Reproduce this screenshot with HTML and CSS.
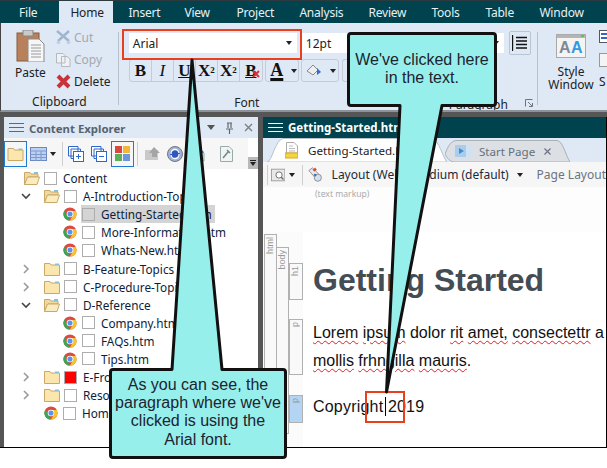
FILE: index.html

```html
<!DOCTYPE html>
<html>
<head>
<meta charset="utf-8">
<title>Getting-Started.htm</title>
<link rel="stylesheet" href="styles.css">
</head>
<body>
<svg class="defs" width="0" height="0">
	<symbol id="chrome" viewBox="0 0 16 16">
		<circle cx="8" cy="8" r="7.5" fill="#dd4b3e"/>
		<path d="M1.6 4 L5 10 L8 15.5 A7.5 7.5 0 0 1 1.6 4z" fill="#3aa757"/>
		<path d="M8 4.5 H14.7 A7.5 7.5 0 0 1 8 15.5 L11 10z" fill="#f5c32c"/>
		<circle cx="8" cy="8" r="3.8" fill="#fff"/>
		<circle cx="8" cy="8" r="2.9" fill="#5b93ea"/>
	</symbol>
	<symbol id="folder" viewBox="0 0 16 14">
		<path d="M.5 3 V1.5 H6 L7 3 H15.5 V13.5 H.5z" fill="#fbe7ae" stroke="#c9a868"/>
		<path d="M11 1.5 H15 V3 H11z" fill="#7fc4dc"/>
	</symbol>
	<symbol id="folder-open" viewBox="0 0 16 14">
		<path d="M.5 13.5 V1.5 H6 L7 3 H14 V6 H4z" fill="#f0d9a0" stroke="#c9a868"/>
		<path d="M.5 13.5 L3.5 6 H15.5 L13 13.5z" fill="#fbecc0" stroke="#c9a868"/>
		<path d="M10 1 H14 V3 H10z" fill="#7fc4dc"/>
	</symbol>
	<symbol id="chev-r" viewBox="0 0 8 10"><path d="M2 1 L6 5 L2 9" fill="none" stroke="#9a9a9a" stroke-width="1.6"/></symbol>
	<symbol id="chev-d" viewBox="0 0 10 8"><path d="M1 2 L5 6 L9 2" fill="none" stroke="#444" stroke-width="1.6"/></symbol>
</svg>

<div class="app">
	<div class="menu">
		<span class="menu-tab">File</span>
		<span class="menu-tab on">Home</span>
		<span class="menu-tab">Insert</span>
		<span class="menu-tab">View</span>
		<span class="menu-tab">Project</span>
		<span class="menu-tab">Analysis</span>
		<span class="menu-tab">Review</span>
		<span class="menu-tab">Tools</span>
		<span class="menu-tab">Table</span>
		<span class="menu-tab">Window</span>
	</div>

	<div class="ribbon">
		<div class="group clip">
			<div class="clip-main">
				<div class="paste">
					<svg width="30" height="32" viewBox="0 0 30 32">
						<rect x="1" y="3" width="22" height="28" fill="#b9805c" stroke="#8a5a3c"/>
						<rect x="7" y="0" width="10" height="6" fill="#c9c9c9" stroke="#888"/>
						<path d="M12 9 H23 L28 14 V32 H12z" fill="#f6f6f6" stroke="#8a8a8a"/>
						<path d="M15 15 H25 M15 18 H25 M15 21 H25 M15 24 H25 M15 27 H25" stroke="#9a9a9a"/>
					</svg>
					<span>Paste</span>
				</div>
				<div class="clip-list">
					<div class="off">
						<svg width="15" height="15" viewBox="0 0 15 15"><path d="M1 1 L13 11 M13 1 L2 11" stroke="#9fb6d0" stroke-width="2.4"/><circle cx="2.5" cy="12.5" r="1.8" fill="#bcd0e6"/><circle cx="12.5" cy="12.5" r="1.8" fill="#bcd0e6"/></svg>
						Cut
					</div>
					<div class="off">
						<svg width="15" height="15" viewBox="0 0 15 15"><path d="M.5 1.5 H7 L9 3.5 V11 H.5z M5.5 4.5 H11 L14 7 V14.5 H5.5z" fill="#eef1f5" stroke="#b5b9bf"/></svg>
						Copy
					</div>
					<div>
						<svg width="15" height="15" viewBox="0 0 15 15"><path d="M2 2 L13 13 M13 2 L2 13" stroke="#c8323a" stroke-width="4"/></svg>
						Delete
					</div>
				</div>
			</div>
			<div class="group-name">Clipboard</div>
		</div>

		<div class="group font">
			<div class="combos">
				<div class="combo face">Arial<i class="caret"></i></div>
				<div class="combo size">12pt<i class="caret"></i></div>
				<div class="para-btn">
					<svg width="16" height="16" viewBox="0 0 16 16"><path d="M1 .5 H.5 V15.5 H1 M4 2.5 H15 M4 6 H15 M4 9.5 H15 M4 13 H15" fill="none" stroke="#111" stroke-width="1.4"/></svg>
				</div>
			</div>
			<div class="fmt-row">
				<div class="fmt-set">
					<b>B</b><em>I</em><b class="ul">U</b><b>X<sup>2</sup></b><b>X<sub>2</sub></b><b class="clear">B<svg width="8" height="8" viewBox="0 0 8 8"><path d="M1 1 L7 7 M7 1 L1 7" stroke="#d8303a" stroke-width="2"/></svg></b>
				</div>
				<div class="fmt-set color">
					<b class="ul thick">A</b><i class="caret"></i>
				</div>
				<div class="fmt-set fill">
					<svg width="16" height="15" viewBox="0 0 16 15"><path d="M1 8 L7 2 L12 7 L7 12z" fill="#eee" stroke="#888"/><path d="M11 5 L15 9 L11 12z" fill="#2f6fd0"/></svg>
					<i class="caret"></i>
				</div>
				<div class="fmt-set blank"></div>
			</div>
			<div class="group-name font-name">
				<span>Font</span>
				<span class="para-name">Paragraph</span>
				<svg class="launcher" width="8" height="8" viewBox="0 0 8 8"><path d="M.5 7.5 V.5 H7.5 M3 3 L7 7 M4 7.5 H7.5 V4" fill="none" stroke="#6c7480"/></svg>
			</div>
		</div>

		<div class="group style">
			<svg width="30" height="24" viewBox="0 0 30 24">
				<rect x=".5" y=".5" width="29" height="23" fill="#f4f4f4" stroke="#a9a9a9"/>
				<rect x="1" y="1" width="28" height="3" fill="#b5b5b5"/>
				<rect x="25" y="1" width="3" height="2" fill="#5cc25c"/>
				<text x="3" y="19" class="aa-grey">A</text>
				<text x="15" y="19" class="aa-blue">A</text>
			</svg>
			<span>Style<br>Window</span>
		</div>
		<div class="ribbon-end">
			<svg width="8" height="44" viewBox="0 0 8 44"><rect x=".5" y=".5" width="12" height="12" fill="#fff" stroke="#556"/><rect x="2" y="3" width="8" height="2" fill="#2f67c8"/><rect x="2" y="7" width="8" height="2" fill="#2f67c8"/><rect x=".5" y="23.5" width="12" height="13" fill="#f4f4f4" stroke="#999"/></svg>
			<span>S</span>
		</div>
	</div>

	<div class="panes">
		<div class="explorer">
			<div class="pane-title">
				<span class="burger dark"><i></i><i></i><i></i></span>
				<span class="pane-name">Content Explorer</span>
				<span class="pane-ctl">
					<i class="caret big"></i>
					<svg width="9" height="12" viewBox="0 0 9 12"><path d="M2 1 H7 M3 1 V6 M6 1 V6 M1 7 H8 M4.5 7 V12" fill="none" stroke="#666" stroke-width="1.2"/></svg>
					<svg width="9" height="9" viewBox="0 0 9 9"><path d="M1 1 L8 8 M8 1 L1 8" stroke="#7f7f7f" stroke-width="1.4"/></svg>
				</span>
			</div>
			<div class="explorer-tools">
				<span class="tool picked"><svg width="17" height="14"><use href="#folder"/></svg></span>
				<span class="tool">
					<svg width="17" height="14" viewBox="0 0 17 14"><rect x=".5" y=".5" width="16" height="13" fill="#bcd0f0" stroke="#6f88c0"/><path d="M.5 4 H16 M.5 7.5 H16 M.5 10.5 H16 M6 4 V14 M11 4 V14" stroke="#7f9ad0"/></svg>
				</span>
				<i class="caret"></i>
				<span class="tool-sep"></span>
				<span class="tool wide">
					<svg width="16" height="16" viewBox="0 0 16 16"><path d="M.5 .5 H10 V10 H.5z M3 3 H12.5 V12.5 H3z" fill="#fff" stroke="#2f67c8"/><rect x="5.5" y="5.5" width="10" height="10" fill="#fff" stroke="#2f67c8"/><path d="M8 10.5 H13 M10.5 8 V13" stroke="#2f67c8"/></svg>
				</span>
				<span class="tool wide">
					<svg width="16" height="16" viewBox="0 0 16 16"><path d="M.5 .5 H10 V10 H.5z M3 3 H12.5 V12.5 H3z" fill="#fff" stroke="#2f67c8"/><rect x="5.5" y="5.5" width="10" height="10" fill="#fff" stroke="#2f67c8"/><path d="M8 10.5 H13" stroke="#2f67c8"/></svg>
				</span>
				<span class="tool picked colors">
					<svg width="15" height="15" viewBox="0 0 15 15"><rect x="0" y="0" width="7" height="7" fill="#d8483e"/><rect x="8" y="0" width="7" height="7" fill="#f1b63a"/><rect x="0" y="8" width="7" height="7" fill="#5cae5c"/><rect x="8" y="8" width="7" height="7" fill="#6d96dc"/></svg>
				</span>
				<span class="tool-sep"></span>
				<span class="tool grey">
					<svg width="17" height="15" viewBox="0 0 17 15"><path d="M1 4 H14 V14 H1z" fill="#c9c9c9"/><path d="M10 1 L16 7 H13 V11 H8 V7 H5z" fill="#a5a5a5"/></svg>
				</span>
				<span class="tool grey">
					<svg width="16" height="16" viewBox="0 0 16 16"><circle cx="8" cy="8" r="7.5" fill="#9fb2d8" stroke="#777"/><circle cx="8" cy="8" r="5" fill="#2f55c0"/><path d="M4 8 A4 4 0 0 1 12 7 M12 8 A4 4 0 0 1 4 9" fill="none" stroke="#fff" stroke-width="1.4"/></svg>
				</span>
				<span class="tool grey">
					<svg width="14" height="16" viewBox="0 0 14 16"><path d="M1 3 H9 L13 7 V15 H1z" fill="#dfe8f5" stroke="#8aa"/><path d="M2 6 L7 1 L13 6 L8 9z" fill="#3a7cc8"/></svg>
				</span>
				<span class="tool grey last">
					<svg width="13" height="16" viewBox="0 0 13 16"><path d="M.5 .5 H9 L12.5 4 V15.5 H.5z" fill="#f1f4f4" stroke="#9aa"/><path d="M3 12 L8 6 M7 4 L10 7" stroke="#788" stroke-width="1.6"/></svg>
				</span>
				<span class="overflow"><i></i><i class="caret"></i></span>
			</div>
			<div class="tree">
				<div class="row top"><svg class="ic" width="16" height="14"><use href="#folder-open"/></svg><i class="cb"></i>Content</div>
				<div class="row fold"><svg class="tw" width="10" height="8"><use href="#chev-d"/></svg><svg class="ic" width="16" height="14"><use href="#folder-open"/></svg><i class="cb"></i>A-Introduction-Topics</div>
				<div class="row file"><svg class="ic" width="14" height="14"><use href="#chrome"/></svg><span class="sel"><i class="cb"></i>Getting-Started.htm</span></div>
				<div class="row file"><svg class="ic" width="14" height="14"><use href="#chrome"/></svg><i class="cb"></i>More-Information.htm</div>
				<div class="row file"><svg class="ic" width="14" height="14"><use href="#chrome"/></svg><i class="cb"></i>Whats-New.htm</div>
				<div class="row fold"><svg class="tw" width="8" height="10"><use href="#chev-r"/></svg><svg class="ic" width="16" height="14"><use href="#folder"/></svg><i class="cb"></i>B-Feature-Topics</div>
				<div class="row fold"><svg class="tw" width="8" height="10"><use href="#chev-r"/></svg><svg class="ic" width="16" height="14"><use href="#folder"/></svg><i class="cb"></i>C-Procedure-Topics</div>
				<div class="row fold"><svg class="tw" width="10" height="8"><use href="#chev-d"/></svg><svg class="ic" width="16" height="14"><use href="#folder-open"/></svg><i class="cb"></i>D-Reference</div>
				<div class="row file"><svg class="ic" width="14" height="14"><use href="#chrome"/></svg><i class="cb"></i>Company.htm</div>
				<div class="row file"><svg class="ic" width="14" height="14"><use href="#chrome"/></svg><i class="cb"></i>FAQs.htm</div>
				<div class="row file"><svg class="ic" width="14" height="14"><use href="#chrome"/></svg><i class="cb"></i>Tips.htm</div>
				<div class="row fold"><svg class="tw" width="8" height="10"><use href="#chev-r"/></svg><svg class="ic" width="16" height="14"><use href="#folder"/></svg><i class="cb red"></i>E-Fro</div>
				<div class="row fold"><svg class="tw" width="8" height="10"><use href="#chev-r"/></svg><svg class="ic" width="16" height="14"><use href="#folder"/></svg><i class="cb"></i>Reso</div>
				<div class="row home"><svg class="ic" width="14" height="14"><use href="#chrome"/></svg><i class="cb"></i>Hom</div>
			</div>
		</div>

		<div class="editor">
			<div class="editor-title">
				<span class="burger"><i></i><i></i><i></i></span>
				<span>Getting-Started.htm</span>
			</div>
			<div class="doc-tabs">
				<div class="doc-tab live">
					<svg class="tab-shape" viewBox="0 0 180 24" preserveAspectRatio="none"><path d="M0 24 C5 24 8 2 16 .5 H165 C172 2 176 20 180 24z" fill="#fff" stroke="#b8c2cc"/></svg>
					<svg class="tab-icon" width="13" height="17" viewBox="0 0 13 17"><path d="M1.5 .5 H9 L12.5 4 V11 H1.5z" fill="#fff" stroke="#aaa"/><path d="M4 4 H8 M4 6.5 H10 M4 9 H10" stroke="#bbb"/><rect x="0" y="11" width="13" height="5" fill="#f6d53a" stroke="#d9a820"/></svg>
					<span>Getting-Started.htm</span>
				</div>
				<div class="doc-tab idle">
					<svg class="tab-shape" viewBox="0 0 125 22" preserveAspectRatio="none"><path d="M0 14 C3 6 6 .5 12 .5 H112 C118 1 120 14 125 22 H10 C5 22 2 18 0 14z" fill="#dcdfe4" stroke="#a9b0b8"/></svg>
					<svg class="tab-icon" width="16" height="12" viewBox="0 0 16 12"><rect width="16" height="12" fill="#a9cdec"/><path d="M4 3 L9 6 L4 9z" fill="#4a8ac8"/><rect x="11" width="5" height="12" fill="#cfe2f3"/></svg>
					<span>Start Page</span>
					<svg class="tab-x" width="7" height="7" viewBox="0 0 7 7"><path d="M.5 .5 L6.5 6.5 M6.5 .5 L.5 6.5" stroke="#6b7480" stroke-width="1.2"/></svg>
				</div>
			</div>
			<div class="doc-tools">
				<span class="tool-sep short"></span>
				<svg width="16" height="14" viewBox="0 0 16 14"><rect x=".5" y=".5" width="15" height="13" fill="#e8e8e8" stroke="#999"/><circle cx="9" cy="7" r="3.5" fill="#fff" stroke="#666"/><path d="M11.5 9.5 L14 12" stroke="#666" stroke-width="1.4"/></svg>
				<i class="caret"></i>
				<span class="tool-sep short second"></span>
				<svg class="layout-ic" width="16" height="16" viewBox="0 0 16 16"><path d="M1 3 L5 0 L12 7 L8 11z" fill="#e9e9e9" stroke="#888"/><path d="M5 2 L8 0 L10 2 L7 4z" fill="#d8483e"/><circle cx="11" cy="11" r="4" fill="#cfe2f3" stroke="#888"/><path d="M7 7 L9 9" stroke="#2f67c8" stroke-width="2"/></svg>
				<span class="layout-name">Layout (Web - Medium (default)</span>
				<i class="caret"></i>
				<span class="page-layout">Page Layout</span>
			</div>
			<div class="markup-hint">(text markup)</div>
			<div class="doc-area">
				<div class="struct">
					<div class="s-tag s-html"><span>html</span></div>
					<div class="s-tag s-body"><span>body</span></div>
					<div class="s-blocks">
						<div class="s-tag s-h1"><span>h1</span></div>
						<div class="s-tag s-p"><span>p</span></div>
						<div class="s-tag s-p now"><span>p</span></div>
					</div>
				</div>
				<div class="page">
					<h1>Getting Started</h1>
					<p class="lorem"><u>Lorem</u> <u>ipsum</u> dolor <u>rit</u> <u>amet,</u> <u>consectettr</u> a<br><u>mollis</u> <u>frhngilla</u> <u>mauris</u>.</p>
					<p class="copy">Copyright<i class="text-caret"></i> 2019</p>
				</div>
			</div>
		</div>
	</div>

	<div class="red-box font-box"></div>
	<div class="red-box text-box"></div>

	<svg class="balloons" width="607" height="468" viewBox="0 0 607 468">
		<path d="M351 33.5 H493 Q495.5 33.5 495.5 36 V103 Q495.5 105.5 493 105.5 H442 L386.5 392 L400 105.5 H351 Q348.5 105.5 348.5 103 V36 Q348.5 33.5 351 33.5z"/>
		<path d="M113 369.5 H172 L192 60 L222 369.5 H283 Q285.5 369.5 285.5 372 V455 Q285.5 457.5 283 457.5 H113 Q110.5 457.5 110.5 455 V372 Q110.5 369.5 113 369.5z"/>
	</svg>
	<div class="note note-top">We've clicked here<br>in the text.</div>
	<div class="note note-bottom">As you can see, the<br>paragraph where we've<br>clicked is using the<br>Arial font.</div>
</div>
</body>
</html>
```

FILE: styles.css

```css
* { box-sizing: border-box; }
html, body { margin: 0; background: #fff; }
body { width: 607px; height: 468px; overflow: hidden; font-family: "Noto Sans", "Liberation Sans", sans-serif; font-size: 12px; color: #222; }
i { font-style: normal; }
.defs { position: absolute; }
.app { position: relative; width: 607px; height: 448px; display: flex; flex-direction: column; background: #565656; border-bottom: 1px solid #000; }
.caret { display: inline-block; width: 0; height: 0; border: 3px solid transparent; border-top: 4px solid #222; border-bottom: 0; }

/* menu tabs */
.menu { height: 23px; flex: none; display: flex; background: #00434f; padding-left: 6px; border-top: 1px solid #2b3b40; letter-spacing: -.2px; }
.menu-tab { padding: 3px 13px 0; color: #e8f0f2; font-size: 12px; line-height: 18px; }
.menu-tab.on { background: #dfe8f5; color: #222; padding: 3px 11px 0; margin: 0 5px 0 9px; width: 54px; text-align: center; }
.menu-tab:nth-child(n+3) { padding: 3px 0 0; }
.menu-tab:nth-child(3) { margin-left: 10px; width: 56px; }
.menu-tab:nth-child(4) { width: 52px; }
.menu-tab:nth-child(5) { width: 63px; }
.menu-tab:nth-child(6) { width: 69px; }
.menu-tab:nth-child(7) { width: 63px; }
.menu-tab:nth-child(8) { width: 54px; }
.menu-tab:nth-child(9) { width: 54px; }

/* ribbon */
.ribbon { height: 89px; flex: none; display: flex; background: #dfe8f5; border-bottom: 2px solid #8d939a; border-left: 1px solid #444; overflow: hidden; }
.group { position: relative; display: flex; flex-direction: column; }
.group-name { color: #222; text-align: center; line-height: 16px; }
.clip { width: 117px; padding-top: 7px; }
.clip-main { height: 64px; display: flex; }
.paste { width: 44px; margin-left: 15px; display: flex; flex-direction: column; }
.paste svg { display: block; }
.paste span { margin: 2px 0 0 -1px; line-height: 17px; }
.clip-list { margin: -4px 0 0 -4px; }
.clip-list div { height: 22px; display: flex; align-items: center; gap: 3px; }
.clip-list .off { color: #a3a9b0; }
.clip .group-name { margin-top: 1px; }
.font { width: 420px; padding-left: 10px; border-left: 1px solid #b9c1cc; height: 73px; margin-top: 9px; padding-top: 1px; }
.combos { display: flex; align-items: stretch; height: 20px; }
.combo { display: flex; align-items: center; justify-content: space-between; background: #fff; padding: 0 5px 0 4px; color: #222; }
.face { width: 168px; }
.size { width: 202px; margin-left: 5px; }
.para-btn { width: 22px; height: 24px; margin: -2px 0 0 5px; display: flex; align-items: center; justify-content: center; border: 1px solid #b9c4d2; border-radius: 2px; }
.fmt-row { display: flex; gap: 2px; margin-top: 6px; height: 23px; }
.fmt-set { display: flex; align-items: center; border: 1px solid #c3ccd8; border-radius: 3px; font-family: "Liberation Serif", serif; font-size: 17px; color: #111; }
.fmt-set b, .fmt-set em { width: 22px; height: 100%; display: flex; align-items: center; justify-content: center; border-right: 1px solid #c3ccd8; }
.fmt-set b:last-child { border-right: 0; }
.fmt-set sup, .fmt-set sub { font-size: 9px; line-height: 9px; }
.fmt-set .ul { text-decoration: underline; }
.fmt-set .clear { position: relative; text-decoration: underline; }
.fmt-set .clear svg { position: absolute; right: 2px; bottom: 3px; }
.fmt-set.color { width: 34px; gap: 3px; }
.fmt-set.color b { border: 0; width: 22px; font-size: 18px; text-decoration-thickness: 3px; }
.fmt-set.fill { width: 38px; gap: 8px; padding-left: 4px; }
.fmt-set.blank { width: 60px; border-right: 0; margin-left: 1px; }
.font-name { position: relative; margin-top: 13px; width: 236px; }
.para-name { position: absolute; left: 320px; top: 2px; }
.launcher { position: absolute; left: 396px; top: 4px; }
.style { width: 62px; align-items: center; border-left: 1px solid #b9c1cc; height: 73px; margin-top: 9px; padding-top: 2px; padding-left: 5px; line-height: 13px; text-align: center; }
.style svg { margin-bottom: 7px; }
.aa-grey { font: bold 16px "Liberation Sans", sans-serif; fill: #7d8a96; }
.aa-blue { font: bold 16px "Liberation Sans", sans-serif; fill: #2f9be0; }
.ribbon-end { width: 8px; padding-top: 7px; position: relative; }
.ribbon-end span { position: absolute; left: 0; top: 50px; }
.ribbon-end svg { display: block; }

/* panes */
.panes { flex: 1; display: flex; gap: 5px; padding: 5px 0 0 4px; min-height: 0; }
.explorer { width: 254px; display: flex; flex-direction: column; background: #fff; }
.pane-title { height: 21px; flex: none; display: flex; align-items: center; background: #dfe8f5; padding-left: 5px; }
.burger { width: 15px; display: flex; flex-direction: column; gap: 3px; }
.burger i { display: block; height: 1px; background: #fff; }
.burger.dark i { background: #666; }
.pane-name { margin: 1px 0 0 5px; font-weight: 700; font-size: 11.4px; color: #56636e; flex: 1; }
.pane-ctl { display: flex; align-items: center; gap: 10px; padding-right: 5px; }
.caret.big { border-width: 4px; border-top-width: 5px; border-top-color: #555; }
.explorer-tools { position: relative; height: 31px; flex: none; display: flex; align-items: center; background: #f6f6f6; margin-right: 10px; }
.tool { width: 18px; height: 26px; display: flex; align-items: center; justify-content: center; margin-left: 2px; flex: none; }
.tool.picked { width: 23px; border: 1px solid #1e7ad2; margin-left: 0; }
.tool.wide { margin-left: 4px; }
.tool.wide + .wide { margin-left: 5px; }
.tool.picked.colors { margin-left: 3px; }
.tool.grey + .grey { margin-left: 5px; }
.tool.grey.last { margin-left: 10px; }
.tool-sep { width: 1px; height: 24px; background: #cfcfcf; margin: 0 0 0 6px; flex: none; }
.colors + .tool-sep { margin: 0 3px; }
.tool-sep.short { height: 20px; margin: 0; }
.tool-sep.short.second { margin-left: 3px; }
.explorer-tools .caret { margin-left: 3px; }
.overflow { position: absolute; right: -10px; bottom: 0; width: 10px; height: 12px; background: #b9b9b9; display: flex; flex-direction: column; align-items: center; gap: 1px; padding-top: 3px; }
.overflow i:first-child { width: 6px; height: 1px; background: #222; }
.overflow .caret { margin-left: 0; }
.tree { flex: 1; font-size: 11.75px; color: #0c1e3c; }
.row { height: 18.1px; display: flex; align-items: center; white-space: nowrap; }
.row .ic { flex: none; margin-right: 4px; }
.tw { flex: none; }
.row.top { padding-left: 20px; }
.row.fold { padding-left: 18px; }
.row.fold .tw { margin-right: 14px; }
.row.fold .tw[width="10"] { margin-left: -1px; margin-right: 13px; }
.row.file { padding-left: 59px; }
.row.file .ic { margin-right: 5px; }
.row.home { padding-left: 40px; }
.row.home .ic { margin-right: 5px; }
.cb { flex: none; display: inline-block; width: 13px; height: 13px; border: 1px solid #adadad; background: #fff; margin-right: 6px; }
.cb.red { background: #f00; }
.sel { width: 134px; display: flex; align-items: center; background: #d4d4d4; height: 18px; margin-left: -1px; padding-left: 1px; }
.sel .cb { background: #d4d4d4; }

/* editor */
.editor { flex: 1; display: flex; flex-direction: column; background: #fff; border-right: 1px solid #000; min-width: 0; }
.editor-title { height: 21px; flex: none; display: flex; align-items: center; gap: 5px; padding-left: 5px; background: #00434f; color: #fff; font-weight: 700; font-size: 11.5px; }
.doc-tabs { height: 24px; flex: none; display: flex; background: #dfe8f5; padding-left: 4px; font-size: 11.6px; }
.doc-tab { position: relative; display: flex; align-items: center; height: 24px; }
.tab-shape { position: absolute; left: 0; top: 0; width: 100%; height: 100%; }
.doc-tab svg:not(.tab-shape), .doc-tab span { position: relative; }
.live { width: 180px; padding-left: 18px; gap: 10px; }
.idle { width: 125px; padding-left: 10px; gap: 8px; color: #66707c; margin-left: -2px; height: 22px; margin-top: 2px; }
.tab-x { margin-left: 1px; }
.doc-tools { height: 25px; flex: none; display: flex; align-items: center; gap: 3px; background: #f6f6f6; padding-left: 4px; white-space: nowrap; overflow: hidden; }
.doc-tools .caret { margin: 0 1px; }
.layout-ic { margin-left: 2px; }
.layout-name { margin-left: 6px; color: #1b2a3a; }
.doc-tools .layout-name + .caret { margin-left: 5px; }
.page-layout { color: #6b7480; margin-left: 10px; }
.markup-hint { height: 45px; flex: none; padding: 2px 0 0 52px; font-size: 8.6px; color: #aaa; line-height: 11px; background: #fdfdfd; }
.doc-area { flex: 1; display: flex; background: #fdfdfd; min-height: 0; }
.struct { width: 40px; flex: none; display: flex; font-family: "Liberation Sans", sans-serif; font-size: 9px; color: #999; background: #fbfbfb; }
.s-tag { border: 1px solid #b0b0b0; background: #f9f9f9; }
.s-tag span { display: block; writing-mode: vertical-rl; transform: rotate(180deg); text-align: right; line-height: 11px; padding: 2px 0; }
.s-html { width: 13px; margin: 2px 0 0 1px; flex: none; }
.s-body { width: 13px; margin: 15px 0 13px -1px; flex: none; }
.s-blocks { width: 14px; display: flex; flex-direction: column; flex: none; }
.s-blocks .s-tag { border-left: 1px solid #b0b0b0; }
.s-h1 { margin-top: 31px; height: 37px; }
.s-p { margin-top: 19px; height: 56px; }
.s-p.now { margin-top: 20px; height: 28px; background: #b3d4f2; }
.page { flex: 1; background: #fff; padding: 30px 0 0 10px; color: #111; white-space: nowrap; overflow: hidden; font-family: "Liberation Sans", sans-serif; min-width: 0; }
h1 { margin: 0; font-size: 32px; line-height: 36px; color: #444c54; font-weight: 700; }
.lorem { margin: 21px 0 0; font-size: 16px; line-height: 28px; }
.lorem u { text-decoration: underline wavy #e02020 1px; text-underline-offset: 2px; }
.copy { margin: 22px 0 0; font-size: 16px; line-height: 19px; letter-spacing: .2px; }
.text-caret { display: inline-block; width: 1px; height: 19px; background: #000; vertical-align: -4px; margin-left: 2px; margin-right: -3px; }

/* things laid over the window */
.red-box { position: absolute; border: 2px solid #e8401c; }
.font-box { left: 122px; top: 29px; width: 180px; height: 31px; }
.text-box { left: 365px; top: 391px; width: 40px; height: 32px; }
.balloons { position: absolute; left: 0; top: 0; }
.balloons path { fill: #97efeb; stroke: #111; stroke-width: 3; stroke-linejoin: round; }
.note { position: absolute; text-align: center; font-family: "Liberation Sans", sans-serif; font-size: 16px; line-height: 18.2px; color: #1c2430; white-space: nowrap; }
.note-top { left: 348px; top: 51px; width: 148px; }
.note-bottom { left: 110px; top: 376px; width: 176px; }
```
